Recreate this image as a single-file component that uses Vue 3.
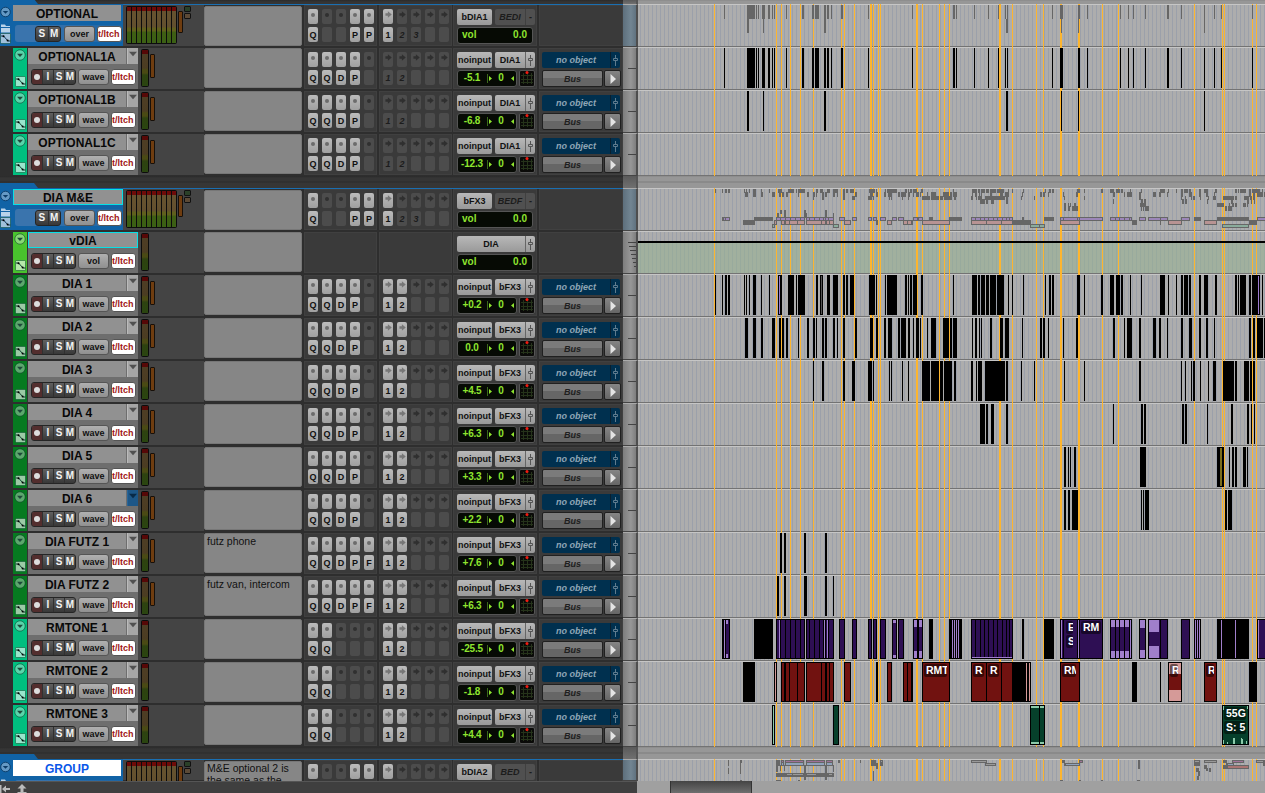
<template>
  <div class="editor">
    <div class="tracks">
      <template v-for="track in tracks" :key="track.name">
        <div v-if="track.folder" class="gap" :class="{ first: track.name === 'OPTIONAL' }">
          <div class="gap-left"><i class="tab"></i></div>
          <div class="gap-ruler"></div>
          <div class="gap-lane"></div>
        </div>
        <div class="row" :class="{ folder: track.folder, cut: track.cut }">
          <div class="head" :style="{ '--track': track.color }">
            <div class="strip">
              <svg class="ico-circle" viewBox="0 0 12 12">
                <circle cx="6" cy="6" r="5.2" />
                <path d="M3 4.8h6L6 8z" />
              </svg>
              <svg v-if="track.folder" class="ico-folder" viewBox="0 0 11 9">
                <path d="M1 2V0.5h4L6 2h4v1H1zM1 4h9v4.5H1z" />
              </svg>
              <svg class="ico-auto" viewBox="0 0 11 11">
                <rect x="0.5" y="0.5" width="10" height="10" rx="1" />
                <path d="M1 3h2.5L8 8h2.5" />
                <circle cx="3.5" cy="3.3" r="1" />
                <circle cx="7.6" cy="7.6" r="1" />
              </svg>
            </div>
            <div class="info">
              <div class="name-line">
                <div class="name" :class="{ selected: track.selected, group: track.cut }">{{ track.name }}</div>
                <div v-if="!track.folder && !track.selected" class="drop" :class="{ blue: track.name === 'DIA 6' }">
                  <svg viewBox="0 0 9 6"><path d="M0 0.5h9L4.5 5.5z" /></svg>
                </div>
              </div>
              <div class="buttons">
                <div class="ism">
                  <b v-if="!track.folder" class="rec"><i></i></b>
                  <b v-if="!track.folder">I</b>
                  <b>S</b>
                  <b>M</b>
                </div>
                <div class="view">{{ track.view || 'wave' }}</div>
                <div class="touch"><span>t/ltch</span></div>
              </div>
            </div>
          </div>
          <div class="meters">
            <div class="meter"><i v-for="n in track.folder ? 10 : 1" :key="n"></i></div>
            <div v-if="track.gain !== false" class="gain"></div>
            <div v-if="track.folder" class="leds"><i></i><i></i></div>
          </div>
          <div class="comments">{{ track.comment }}</div>
          <div class="panel slots">
            <template v-if="track.inserts">
              <div v-for="(c, i) in 5" :key="i" class="slot-col">
                <div class="slot" :class="{ on: track.inserts[i] !== ' ' }"><i class="dot"></i></div>
                <div class="slot" :class="{ on: track.inserts[i] !== ' ' }">{{ track.inserts[i] }}</div>
              </div>
            </template>
          </div>
          <div class="panel slots">
            <template v-if="track.sends">
              <div v-for="(c, i) in 5" :key="i" class="slot-col">
                <div class="slot" :class="{ on: i < track.sendsOn }">
                  <svg viewBox="0 0 8 8"><path d="M0.5 2.700h2.800V0.300L7.700 4L3.300 7.700V5.300h-2.800z" /></svg>
                </div>
                <div class="slot" :class="{ on: i < track.sendsOn }">{{ i < track.sends ? i + 1 : '' }}</div>
              </div>
            </template>
          </div>
          <div class="panel io">
            <div class="io-line">
              <div v-if="!track.vca" class="btn input">{{ track.folder ? track.input : 'noinput' }}</div>
              <div class="btn output" :class="{ off: track.folder }">
                <span>{{ track.output }}</span>
                <em v-if="track.folder">-</em>
                <em v-else><svg viewBox="0 0 7 11"><path d="M3.500 0v3M3.500 6v5M1.500 3.500h4v2h-4z" /></svg></em>
              </div>
            </div>
            <div class="io-line">
              <div v-if="track.folder || track.vca" class="lcd wide"><span>vol</span><span>0.0</span></div>
              <template v-else>
                <div class="lcd">
                  <span class="db">{{ track.db }}</span>
                  <svg class="pan" viewBox="0 0 5 9"><path class="bar" d="M0.5 0v9" /><path d="M2 2l3 2.500l-3 2.500z" /></svg>
                  <span class="zero">0</span>
                  <svg class="pan" viewBox="0 0 5 9"><path d="M4 2l-3 2.500l3 2.500z" /></svg>
                </div>
                <div class="panner">
                  <svg viewBox="0 0 14 14">
                    <path d="M3.500 2v11M7.500 2v11M11.500 2v11M1 4.500h12M1 8.500h12M1 11.500h12" />
                    <circle cx="7" cy="1.500" r="1.500" />
                  </svg>
                </div>
              </template>
            </div>
          </div>
          <div class="panel object">
            <template v-if="!track.folder && !track.vca">
              <div class="obj">
                <span>no object</span>
                <em><svg viewBox="0 0 7 11"><path d="M3.500 0v3M3.500 6v5M1.500 3.500h4v2h-4z" /></svg></em>
              </div>
              <div class="bus-line">
                <div class="bus">Bus</div>
                <div class="play"><svg viewBox="0 0 6 10"><path d="M0.500 0L6 5L0.500 10z" /></svg></div>
              </div>
            </template>
          </div>
          <div class="ruler">
            <template v-if="track.vca">
              <i v-for="n in 7" :key="n" class="vtick" :style="{ width: 9 - n + 'px' }"></i>
            </template>
            <i v-else-if="!track.folder" class="tick"></i>
          </div>
          <div class="lane">
            <svg width="627" :height="track.cut ? 22 : 43" viewBox="638 0 627 43" preserveAspectRatio="xMinYMin slice" shape-rendering="crispEdges">
              <rect v-if="track.vca" x="638" y="12" width="627" height="30" class="vca-fill" />
              <rect v-for="m in markers" :key="m[0]" :x="m[0]" y="0" :width="m[1]" height="43" class="marker" />
              <rect v-if="track.vca" x="638" y="10" width="627" height="2" fill="#000" />
              <rect v-for="(r, i) in shapes(track)" :key="i" :x="r.x" :y="r.y" :width="r.w" :height="r.h" :fill="r.f" />
            </svg>
            <div v-for="l in track.labels" :key="l.x" class="clip-label" :style="{ left: l.x - 638 + 'px', width: l.w + 'px' }">
              <span v-for="t in l.text" :key="t">{{ t }}</span>
            </div>
          </div>
        </div>
      </template>
    </div>
    <div class="bottom">
      <div class="bottom-left">
        <svg viewBox="0 0 10 10"><path d="M0 1h1.500v8H0zM2 5l4-3.500v2.500h4v2H6v2.500z" /></svg>
        <svg viewBox="0 0 10 10"><path d="M0.500 8h9v2h-9zM5 0l4.500 4.500H6.500V8h-3V4.500H0.500z" /></svg>
      </div>
      <div class="scroll"><div class="thumb"></div></div>
    </div>
  </div>
</template>

<script setup>
// "x" or "x,width", separated by spaces
const parse = (s) => s.trim().split(/\s+/).map((p) => {
  const [x, w = 1] = p.split(',').map(Number)
  return [x, w]
})

const markers = parse('714 776 781 790 800 813 841 844 854 870,2 873 878 880 916,2 922 939 944 949 999,2 1012 1036 1043 1060,2 1078,2 1102 1118 1194 1222 1224 1252 1256')

const optA = '724 747,8 756 758 762,3 768,2 772 774 786 802,2 812,2 815,4 824,2 827,2 831 841,2 868 912 953,2 956 974 988 998 1005 1007 1052 1060,3 1078,2 1087 1120 1128 1133 1145 1167,2 1181 1204 1214 1221 1252'
const optB = '747,2 763 824,2 1006,2 1061 1078 1204'
const dia1 = '715 722 725,2 728,2 744 746 749 753,3 761 769 778,4 788,6 796 798,7 816,2 820,3 827,3 833,5 843,2 846,2 850,4 869,6 876 885 887,10 905,2 908 910,2 913,4 921,2 953 972,5 978,2 981,4 986,3 990,6 997,7 1008 1012 1023 1045 1049,2 1052,2 1077,3 1084 1101,2 1110,4 1116,4 1121,2 1130 1141 1160,5 1168 1176 1181,2 1184,4 1189,2 1199,2 1204,4 1215,2 1235,2 1238 1240,6 1249,2 1252,8 1262'
const dia2 = '745,3 753,3 761,2 772,3 779,2 782,2 786,2 798 807,2 813,2 816 822,2 825,2 833,2 837 843,2 855,2 870,3 876,2 884,2 888,4 898,2 901,5 908,2 913 916,3 920 927 931,5 943,6 950,2 953,4 972 975,2 979 981 990,2 1000,3 1005,4 1022 1040,2 1043,2 1048 1063 1076,2 1113,2 1124 1127,5 1139,2 1153,3 1159,2 1167 1181,2 1189,3 1199,2 1206,2 1214 1249,2 1253,2 1257,6 1264'
const dia3 = '813 822,2 843,2 852,3 868,4 873 889 891 902 908 922,8 931,8 940,3 944,8 954,2 971,2 976 978,4 985,20 1006,2 1021 1034 1064 1084 1139,2 1181 1185 1191 1193,2 1200 1208 1213,3 1223,11 1235,2 1244,5 1250,2 1253,2'
const dia4 = '980,5 986,2 991,3 1006,2 1113 1141,2 1144,2 1182,2 1185,2 1207 1231,2 1247,2 1251 1254'
const dia5 = '1064,2 1068 1070 1074,2 1140,6 1217,7 1229 1232,2 1235,2 1243,3 1247'
const dia6 = '1064,2 1068,2 1072,6 1141 1143 1145,4 1225,2 1228,4'
const futz1 = '780,2 784,2 804,2 825,2'
const futz2 = '777,2 784,2 804,3 825,2 833'

// room tone clips: solid black, coloured bodies, dividers, thin fades and fade caps
const rm1 = {
  fill: '#2e0f54', light: '#a07fcb', dim: '#9c86b8',
  solid: '754,19 929,4 949,13 1022,2 1044,10 1194,7 1217,32',
  body: '722,8 776,29 806,28 839,6 852,5 868,4 873,4 880,6 892,5 898,6 913,5 918,5 971,42 1060,43 1110,22 1139,7 1148,20 1181,9 1257,9',
  cuts: '723 725 780 785 790 795 800 809 814 819 823 825 828 975 980 984 988 993 997 1002 1006 1009 1063 1077 1079 1115 1119 1124 1129 1160',
  fades: '724 779 824 827 952 954 956 958 1061 1078 1130 1195 1197 1199 1221 1235 1258',
  caps: [[726, 2, 4], [893, 3, 3], [914, 3, 7], [919, 3, 7], [1111, 4, 7], [1116, 3, 7], [1120, 4, 7], [1125, 4, 7], [1140, 5, 8], [1149, 10, 12]]
}
const rm2 = {
  fill: '#711210', light: '#d59a98', dim: '#b89393',
  solid: '743,12 876,2 1013,18 1132,5 1160 1249,8',
  body: '781,24 806,28 844,7 887,5 903,10 922,28 971,42 1060,20 1168,14 1204,13',
  cuts: '784,2 789 797 821 825,2 829 907 911,2 986 1001',
  pale: '774,3',
  fades: '1026 1029',
  caps: [[1169, 12, 11]]
}
const rm3 = {
  fill: '#06402b', light: '#8ccbaa', dim: '#8aac9c',
  solid: '',
  body: '833,6 1030,15 1222,27',
  cuts: '1039',
  pale: '772,3',
  fades: '',
  caps: [[1031, 8, 2], [1040, 4, 2]]
}

const extra = {
  'DIA 1': [[779, 2, 1, 38, '#9c7bd0'], [821, 2, 1, 38, '#555'], [1258, 2, 1, 38, '#9c7bd0']],
  'DIA 5': [[1220, 2, 2, 38, '#7d6d1c']],
  'RMTONE 1': [[972, 39, 40, 1, '#a07fcb']],
  'RMTONE 3': [[1223, 36, 1, 4, '#8ccbaa'], [1227, 38, 1, 2, '#8ccbaa'], [1233, 34, 2, 6, '#8ccbaa'], [1241, 34, 1, 6, '#8ccbaa'], [1242, 35, 1, 5, '#8ccbaa'], [1246, 37, 1, 3, '#8ccbaa'], [1223, 2, 1, 4, '#8ccbaa'], [1247, 2, 1, 3, '#8ccbaa']]
}

// x, y, width, height, colour
const groupOverview = [
  [728, 1, 1, 6], [728, 9, 1, 6], [740, 1, 2, 3], [740, 1, 1, 14], [776, 1, 4, 6], [776, 6, 2, 7], [780, 6, 1, 6], [784, 6, 1, 6],
  [781, 1, 3, 6], [785, 1, 19, 6], [806, 1, 19, 6], [826, 1, 7, 6],
  [782, 2, 1, 1, '#a07098'], [786, 2, 17, 1, '#a07098'], [807, 2, 17, 1, '#a07098'], [827, 2, 5, 1, '#a07098'],
  [782, 4, 1, 2, '#8fa2bb'], [786, 4, 17, 2, '#8fa2bb'], [807, 4, 17, 2, '#8fa2bb'], [827, 4, 5, 2, '#8fa2bb'],
  [804, 6, 2, 15], [825, 6, 2, 15], [833, 6, 1, 7], [776, 14, 58, 4],
  [787, 15, 5, 1, '#999'], [793, 15, 10, 1, '#999'], [807, 15, 9, 1, '#999'], [829, 15, 3, 1, '#999'],
  [838, 1, 2, 3], [860, 1, 1, 3], [871, 1, 5, 6], [876, 4, 2, 6], [873, 12, 1, 10], [880, 1, 3, 6], [881, 2, 1, 1, '#999'],
  [776, 21, 5, 1], [798, 21, 2, 1], [740, 21, 2, 1],
  [971, 1, 16, 3], [972, 2, 14, 1, '#999'], [985, 4, 11, 3], [986, 5, 9, 1, '#999'],
  [1062, 1, 3, 3], [1064, 4, 16, 3], [1066, 5, 13, 1, '#8fa2bb'], [1079, 1, 4, 3], [1080, 2, 2, 1, '#a07098'],
  [1138, 1, 2, 9], [1194, 1, 6, 6], [1195, 2, 4, 1, '#999'], [1196, 9, 3, 4], [1198, 12, 2, 5], [1197, 17, 2, 4],
  [1204, 1, 13, 3], [1205, 2, 11, 1, '#999'], [1204, 6, 3, 4], [1206, 9, 2, 3], [1209, 9, 2, 4],
  [1223, 1, 4, 3], [1226, 4, 8, 3], [1228, 5, 5, 1, '#8fa2bb'], [1232, 1, 12, 3], [1233, 2, 10, 1, '#a07098'],
  [1223, 6, 26, 4], [1228, 7, 20, 2, '#aa7472'], [1256, 1, 9, 3], [1257, 2, 6, 1, '#999'], [1263, 4, 2, 3],
  [1060, 21, 3, 1], [1079, 21, 2, 1], [1101, 21, 2, 1], [1137, 21, 3, 1]
]

function tones(t) {
  return ['solid', 'body', 'pale'].flatMap((k) => (t[k] ? parse(t[k]).map((p) => [...p, k]) : []))
}

function overview(lists, step) {
  const out = []
  lists.forEach((l, k) => {
    const y = step > 10 ? Math.round(1 + k * step) : Math.floor(1 + k * step)
    const h = step > 10 ? Math.round(step) : 4 + (k % 2)
    if (typeof l === 'string') {
      parse(l).forEach(([x, w]) => out.push({ x, y, w, h, f: '#666' }))
      return
    }
    tones(l).forEach(([x, w, kind]) => {
      out.push({ x, y, w, h, f: '#666' })
      if (kind !== 'solid' && w > 2) out.push({ x: x + 1, y: y + 1, w: w - 2, h: h - 2, f: l.dim })
    })
    parse(l.cuts).forEach(([x, w]) => out.push({ x, y, w, h, f: '#666' }))
  })
  return out
}

function shapes(track) {
  if (track.name === 'OPTIONAL') return overview([optA, optB], 13.6)
  if (track.name === 'DIA M&E') return overview([dia1, dia2, dia3, dia4, dia5, dia6, futz1, futz2, rm1, rm2, rm3], 3.5)
  if (track.cut) return groupOverview.map(([x, y, w, h, f = '#666']) => ({ x, y, w, h, f }))
  const out = []
  if (track.clips) parse(track.clips).forEach(([x, w]) => out.push({ x, y: 1, w, h: 40, f: '#000' }))
  const t = track.tones
  if (t) {
    tones(t).forEach(([x, w, kind]) => {
      out.push({ x, y: 1, w, h: 40, f: '#000' })
      if (kind !== 'solid') out.push({ x: x + 1, y: 2, w: w - 2, h: 38, f: kind === 'pale' ? t.light : t.fill })
    })
    t.caps.forEach(([x, w, h]) => {
      out.push({ x, y: 2, w, h, f: t.light })
      out.push({ x, y: 40 - h, w, h, f: t.light })
    })
    parse(t.cuts).forEach(([x, w]) => out.push({ x, y: 1, w, h: 40, f: '#000' }))
    if (t.fades) parse(t.fades).forEach(([x, w]) => out.push({ x, y: 2, w, h: 38, f: t.light }))
  }
  ;(extra[track.name] || []).forEach(([x, y, w, h, f]) => out.push({ x, y, w, h, f }))
  return out
}

const teal = '#00bf7f'
const green = '#067a20'
const blue = '#1163a6'

const opt = (name, db, clips) => ({ name, db, clips, color: teal, inserts: 'QQDP ', sends: 2, sendsOn: 0, output: 'DIA1' })
const dia = (name, db, clips, more) => ({ name, db, clips, color: green, inserts: 'QQDP ', sends: 2, sendsOn: 2, output: 'bFX3', ...more })
const folder = (name, input, output, more) => ({ name, input, output, folder: true, color: blue, view: 'over', inserts: 'Q  PP', sends: 3, sendsOn: 1, ...more })
const tone = (name, db, tones, labels) => ({ name, db, tones, labels, color: teal, gain: false, inserts: 'QQ   ', sends: 2, sendsOn: 2, output: 'bFX3' })

const tracks = [
  folder('OPTIONAL', 'bDIA1', 'BEDI'),
  opt('OPTIONAL1A', '-5.1', optA),
  opt('OPTIONAL1B', '-6.8', optB),
  opt('OPTIONAL1C', '-12.3', ''),
  folder('DIA M&E', 'bFX3', 'BEDF', { selected: true }),
  { name: 'vDIA', vca: true, selected: true, color: '#49c32d', view: 'vol', gain: false, output: 'DIA' },
  dia('DIA 1', '+0.2', dia1),
  dia('DIA 2', '0.0', dia2),
  dia('DIA 3', '+4.5', dia3),
  dia('DIA 4', '+6.3', dia4),
  dia('DIA 5', '+3.3', dia5),
  dia('DIA 6', '+2.2', dia6),
  dia('DIA FUTZ 1', '+7.6', futz1, { inserts: 'QQDPF', comment: 'futz phone' }),
  dia('DIA FUTZ 2', '+6.3', futz2, { inserts: 'QQDPF', comment: 'futz van, intercom' }),
  tone('RMTONE 1', '-25.5', rm1, [{ x: 1066, w: 7, text: ['E', 'S'] }, { x: 1081, w: 20, text: ['RM'] }]),
  tone('RMTONE 2', '-1.8', rm2, [{ x: 924, w: 23, text: ['RMT'] }, { x: 973, w: 11, text: ['R'] }, { x: 988, w: 11, text: ['R'] }, { x: 1062, w: 14, text: ['RM'] }, { x: 1170, w: 8, text: ['R'] }, { x: 1206, w: 8, text: ['R'] }]),
  tone('RMTONE 3', '+4.4', rm3, [{ x: 1224, w: 22, text: ['55G', 'S: 5'] }]),
  folder('GROUP', 'bDIA2', 'BED', { cut: true, comment: 'M&E optional 2 is the same as the' })
]
</script>

<style>
body {
  margin: 0;
  overflow: hidden;
}
</style>

<style scoped>
.editor {
  width: 1265px;
  height: 793px;
  display: flex;
  flex-direction: column;
  background: #2f2f2f;
  overflow: hidden;
  font-family: "Liberation Sans", Arial, sans-serif;
  font-size: 9px;
  font-weight: bold;
  color: #111;
}
.editor * {
  box-sizing: border-box;
}
svg {
  display: block;
  flex: none;
}
.tracks {
  height: 781px;
}
.gap {
  display: flex;
  height: 12px;
}
.gap.first {
  height: 4px;
}
.gap-left {
  width: 623px;
  background: linear-gradient(#2a2a2a 0, #353535 2px, #353535 5px, #2b2b2b 6px, #363636 7px);
  display: flex;
  align-items: flex-end;
}
.tab {
  width: 38px;
  height: 5px;
  background: #1163a6;
  clip-path: polygon(0 0, 34px 0, 38px 100%, 0 100%);
}
.gap-ruler {
  width: 15px;
  background: linear-gradient(#5a5a5a, #707070);
  border-right: 2px solid #555;
}
.gap-lane {
  flex: 1;
  background: linear-gradient(#8e8e8e 0 1px, #979797 1px 5px, #8a8a8a 5px 7px, #979797 7px);
}
.row {
  display: flex;
  height: 43px;
  overflow: hidden;
  background: #2e2e2e;
}
.row.cut {
  height: 22px;
}
.head {
  width: 138px;
  height: 43px;
  padding: 1px 0 1px 13px;
  display: flex;
  flex: none;
}
.strip {
  width: 15px;
  height: 41px;
  padding: 1px 1px 2px;
  background: var(--track);
  border-right: 1px solid #333;
  display: flex;
  flex-direction: column;
  justify-content: space-between;
  align-items: center;
}
.ico-circle {
  width: 12px;
  height: 12px;
}
.ico-circle circle {
  fill: rgba(255, 255, 255, 0.35);
  stroke: rgba(0, 50, 30, 0.5);
}
.ico-circle path {
  fill: #1d4a3a;
}
.ico-auto {
  width: 11px;
  height: 11px;
}
.ico-auto rect {
  fill: rgba(255, 255, 255, 0.6);
  stroke: rgba(0, 70, 40, 0.5);
}
.ico-auto path {
  fill: none;
  stroke: #0c4030;
}
.info {
  flex: 1;
  height: 41px;
  background: #6e6e6e;
}
.name-line {
  display: flex;
  height: 17px;
}
.name {
  flex: 1;
  height: 16px;
  background: #919191;
  text-align: center;
  font-size: 12px;
  line-height: 18px;
  color: #080808;
  white-space: nowrap;
}
.name.selected {
  border: 1px solid #08e0e6;
  line-height: 16px;
}
.name.group {
  background: #fff;
  color: #0b57e8;
}
.drop {
  width: 11px;
  height: 16px;
  margin-left: 1px;
  background: #a6a6a6;
  padding: 3px 0 0 1px;
  border-left: 1px solid #bbb;
}
.drop svg {
  width: 8px;
  height: 6px;
  fill: #505050;
}
.drop.blue {
  background: #1d5788;
  border-color: #2a6597;
}
.drop.blue svg {
  fill: #082a48;
}
.buttons {
  display: flex;
  padding: 4px 0 0 3px;
  gap: 3px;
}
.ism {
  width: 45px;
  height: 16px;
  border-radius: 3px;
  background: linear-gradient(#606060, #383838);
  border: 1px solid #252525;
  display: flex;
  color: #f4f4f4;
  font-size: 10px;
  line-height: 14px;
}
.ism b {
  flex: 1;
  text-align: center;
  border-right: 1px solid #303030;
}
.ism b:last-child {
  border: 0;
}
.ism .rec {
  background: #532e2e;
  display: flex;
  align-items: center;
  justify-content: center;
  border-radius: 2px 0 0 2px;
}
.rec i {
  width: 6px;
  height: 6px;
  border-radius: 50%;
  background: #ddd;
}
.view {
  width: 31px;
  height: 16px;
  margin-right: -1px;
  border-radius: 3px;
  border: 1px solid #555;
  background: linear-gradient(#b0b0b0, #909090);
  text-align: center;
  line-height: 15px;
}
.touch {
  width: 25px;
  height: 16px;
  border-radius: 3px;
  border: 1px solid #555;
  background: #fff;
  color: #a01414;
  line-height: 15px;
  overflow: hidden;
}
.touch span {
  white-space: nowrap;
}
.row:not(.folder) .view {
  margin-left: -1px;
}
.folder .head {
  width: 123px;
  height: 42px;
  padding: 0;
  background: #1163a6;
}
.row.folder {
  box-shadow: inset 0 1px #1a6fb2;
}
.folder .strip {
  width: 13px;
  height: 42px;
  padding: 2px 2px 2px 0;
  border: 0;
}
.folder .ico-circle {
  width: 11px;
}
.folder .ico-circle circle {
  stroke: #0b3b66;
}
.folder .ico-circle path {
  fill: #0b3b66;
}
.ico-folder {
  width: 11px;
  height: 9px;
  margin-top: 5px;
  fill: #b9d3ea;
}
.folder .ico-auto path {
  stroke: #0c3558;
}
.folder .info {
  height: 42px;
  background: transparent;
  padding-top: 1px;
}
.folder .name {
  flex: none;
  width: 108px;
}
.folder .name.selected {
  width: 110px;
}
.folder .buttons {
  margin: 3px 2px 0 2px;
  padding: 1px 0 0 20px;
  height: 17px;
  background: linear-gradient(90deg, #3a74ad 18px, #1d65a4);
  border-radius: 3px;
}
.folder .ism {
  width: 26px;
}
.meters {
  width: 66px;
  background: #444;
  margin: 1px 0;
  padding: 1px 0 0 3px;
  display: flex;
  flex: none;
  gap: 1px;
}
.folder .meters {
  width: 81px;
}
.meter {
  display: flex;
  gap: 1px;
  height: 38px;
  padding: 1px;
  background: #0c0c0c;
  border-radius: 2px;
}
.meter i {
  width: 6px;
  height: 36px;
  background: linear-gradient(#560807 0 4px, #4d3d24 4px 10px, #4b3c22 18px, #4a4a14 20px 23px, #2e4210 25px, #2a4510);
}
.folder .meter {
  width: 51px;
  padding-right: 0;
}
.folder .meter i {
  width: 4px;
  background: linear-gradient(#6e0a08 0 4px, #65522f 4px 10px, #624f2e 20px, #60601d 21px 24px, #3f5e13 25px, #3b6014);
}
.gain {
  width: 5px;
  height: 24px;
  margin-top: 5px;
  background: #6f3d10;
  border: 1px solid #17100a;
  border-radius: 1px;
}
.folder .gain {
  height: 22px;
}
.leds {
  display: flex;
  flex-direction: column;
  gap: 1px;
}
.leds i {
  width: 7px;
  height: 6px;
  border: 1px solid #111;
  border-radius: 1px;
  background: #2a4028;
}
.leds i + i {
  background: #5c4a36;
}
.comments {
  width: 98px;
  height: 40px;
  margin-top: 1px;
  flex: none;
  background: #868686;
  border: 1px solid #777;
  border-radius: 2px;
  padding: 1px 2px;
  font-size: 10.500px;
  font-weight: normal;
  line-height: 12px;
  overflow: hidden;
}
.folder .comments {
  margin-top: 2px;
  padding-top: 0;
}
.panel {
  flex: none;
  margin: 1px 0 1px 2px;
  height: 41px;
  background: #3a3a3a;
  border: 1px solid #404040;
  overflow: hidden;
}
.slots {
  width: 73px;
  display: flex;
  gap: 4px;
  padding: 3px 0 0 3px;
}
.slots + .io {
  margin-left: 1px;
}
.slot-col {
  display: flex;
  flex-direction: column;
  gap: 3px;
}
.slot {
  width: 10px;
  height: 15px;
  border-radius: 2px;
  background: #4c4c4c;
  display: flex;
  align-items: center;
  justify-content: center;
  font-style: italic;
  color: #1c1c1c;
}
.slot.on {
  background: linear-gradient(#bcbcbc, #a0a0a0);
  font-style: normal;
  color: #111;
}
.slot .dot {
  width: 4px;
  height: 4px;
  margin-bottom: 4px;
  border-radius: 50%;
  background: #303030;
}
.slot.on .dot {
  background: #6c6c6c;
}
.slot svg {
  width: 7px;
  height: 7px;
  margin-bottom: 4px;
  fill: #2f2f2f;
}
.slot.on svg {
  fill: #777;
}
.io {
  width: 84px;
  padding: 3px 0 0 3px;
}
.io-line {
  display: flex;
  gap: 3px;
  height: 18px;
}
.btn {
  height: 16px;
  border-radius: 2px;
  background: linear-gradient(#b8b8b8, #999);
  line-height: 16px;
  text-align: center;
  overflow: hidden;
  white-space: nowrap;
}
.input {
  width: 35px;
}
.output {
  flex: 1;
  margin-right: 1px;
  display: flex;
}
.output span {
  flex: 1;
}
.output em,
.obj em {
  width: 10px;
  display: flex;
  align-items: center;
  justify-content: center;
  border-left: 1px solid #666;
}
em svg {
  width: 7px;
  height: 11px;
  fill: none;
  stroke: #555;
}
.output.off {
  background: #505050;
  color: #1c1c1c;
  font-style: italic;
}
.output.off em {
  border-color: #404040;
}
.lcd {
  width: 60px;
  height: 17px;
  border-radius: 3px;
  border: 1px solid #555;
  background: radial-gradient(#182810 35%, transparent 36%) 0 0 / 2px 2px, #060a04;
  color: #8fe52f;
  font-size: 10px;
  line-height: 14px;
  display: flex;
  align-items: center;
  padding-bottom: 1px;
}
.lcd .db {
  width: 28px;
  text-align: center;
  white-space: nowrap;
  letter-spacing: -0.2px;
}
.lcd .zero {
  flex: 1;
  text-align: center;
}
.pan {
  width: 5px;
  height: 9px;
  margin: 0 1px;
  fill: #8fe52f;
}
.pan .bar {
  stroke: #3c6a1c;
}
.lcd.wide {
  width: 76px;
  justify-content: space-between;
  padding: 0 5px 1px 4px;
}
.panner {
  width: 16px;
  height: 17px;
  margin-left: -1px;
  border-radius: 2px;
  border: 1px solid #555;
  background: #0a0a08;
}
.panner svg {
  width: 14px;
  height: 14px;
}
.panner path {
  stroke: #25331a;
  fill: none;
}
.panner circle {
  fill: #f21a10;
}
.object {
  width: 84px;
  padding: 3px 0 0 2px;
}
.obj {
  display: flex;
  width: 78px;
  height: 16px;
  border-radius: 2px;
  background: #00304f;
  color: #8fa6b6;
  font-style: italic;
  line-height: 16px;
  text-align: center;
}
.obj span {
  flex: 1;
}
.obj em {
  border-color: #0b1f2e;
}
.obj em svg {
  stroke: #5f7b8e;
}
.bus-line {
  display: flex;
  gap: 1px;
  padding-top: 2px;
}
.bus {
  width: 61px;
  height: 17px;
  border-radius: 2px;
  border: 1px solid #202020;
  background: linear-gradient(#7b7b7b 50%, #666 50%);
  color: #1f1f1f;
  font-style: italic;
  text-align: center;
  line-height: 16px;
}
.play {
  width: 17px;
  height: 17px;
  border-radius: 2px;
  border: 1px solid #202020;
  background: linear-gradient(#858585, #666);
  display: flex;
  align-items: center;
  justify-content: center;
}
.play svg {
  width: 6px;
  height: 10px;
  fill: #e4e4e4;
}
.ruler {
  width: 15px;
  flex: none;
  margin-left: auto;
  background: linear-gradient(90deg, #7d7d7d, #979797 60%, #7e7e7e);
  border-right: 2px solid #4e4e4e;
  border-top: 1px solid #aaa;
  border-bottom: 1px solid #444;
  display: flex;
  flex-direction: column;
  align-items: flex-end;
}
.folder .ruler {
  background: linear-gradient(90deg, #5d6f7c, #728592 60%, #60727f);
}
.tick {
  width: 8px;
  height: 1px;
  margin-top: 20px;
  background: #444;
}
.vtick {
  height: 1px;
  margin-top: 3px;
  background: #444;
}
.vtick:first-child {
  margin-top: 10px;
}
.lane {
  width: 627px;
  flex: none;
  position: relative;
  background:
    linear-gradient(#c6c6c6, #c6c6c6) 0 0 / 100% 1px no-repeat,
    linear-gradient(#737373, #737373) 0 42px / 100% 1px no-repeat,
    repeating-linear-gradient(90deg, #adadad 0 2px, #9ba0aa 2px 3px, #adadad 3px 4px);
}
.marker {
  fill: #fdb52e;
}
.vca-fill {
  fill: rgba(149, 180, 143, 0.5);
}
.clip-label {
  position: absolute;
  top: 3px;
  display: flex;
  flex-direction: column;
  gap: 1px;
}
.clip-label span {
  height: 13px;
  padding-left: 2px;
  border-radius: 2px;
  background: rgba(0, 0, 0, 0.5);
  color: #fff;
  font-size: 10.500px;
  line-height: 13px;
  white-space: nowrap;
  overflow: hidden;
}
.bottom {
  display: flex;
  height: 12px;
}
.bottom-left {
  width: 637px;
  background: #3f3f3f;
  border-top: 1px solid #555;
  display: flex;
  gap: 7px;
  padding-top: 2px;
}
.bottom-left svg {
  width: 10px;
  height: 10px;
  fill: #bbb;
}
.scroll {
  flex: 1;
  background: #a0a0a0;
  padding-left: 33px;
}
.thumb {
  width: 82px;
  height: 12px;
  border: 1px solid #333;
  border-width: 0 1px;
  background: linear-gradient(#444, #6e6e6e);
}
</style>
